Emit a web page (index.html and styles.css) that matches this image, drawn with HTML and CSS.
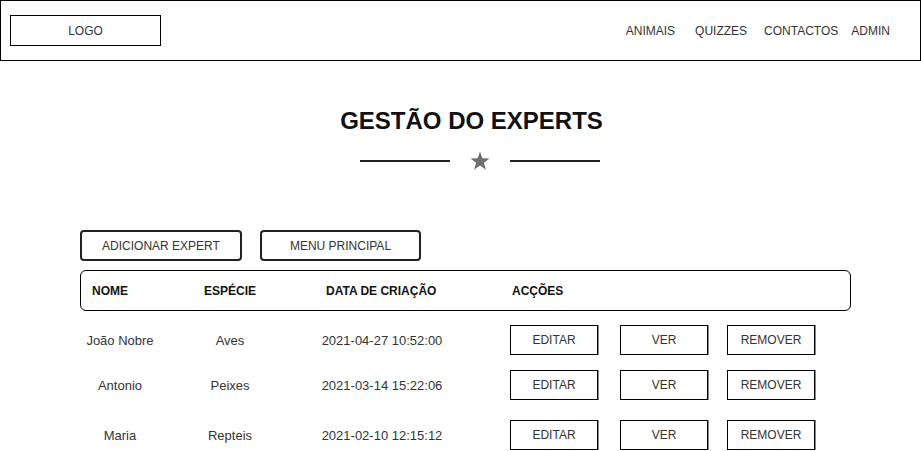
FILE: index.html
```html
<!DOCTYPE html>
<html lang="pt">
<head>
<meta charset="utf-8">
<title>Gestão do Experts</title>
<link rel="stylesheet" href="styles.css">
</head>
<body>
<header class="topbar">
  <div class="logo">LOGO</div>
  <nav class="nav">
    <a class="nav-link">ANIMAIS</a>
    <a class="nav-link nav-link--quiz">QUIZZES</a>
    <a class="nav-link nav-link--contact">CONTACTOS</a>
    <a class="nav-link nav-link--admin">ADMIN</a>
  </nav>
</header>

<main class="page">
  <h1 class="title">GESTÃO DO EXPERTS</h1>
  <div class="divider">
    <span class="divider-line"></span>
    <svg class="star" width="20" height="20" viewBox="0 0 20 20" aria-hidden="true">
      <polygon points="10,0.5 12.4,7.3 19.6,7.4 13.9,11.8 16,18.8 10,14.6 4,18.8 6.1,11.8 0.4,7.4 7.6,7.3" fill="#707070"/>
    </svg>
    <span class="divider-line"></span>
  </div>

  <section class="panel">
    <div class="toolbar">
      <button class="btn-round">ADICIONAR EXPERT</button>
      <button class="btn-round btn-round--menu">MENU PRINCIPAL</button>
    </div>

    <div class="table-head">
      <span>NOME</span>
      <span>ESPÉCIE</span>
      <span>DATA DE CRIAÇÃO</span>
      <span>ACÇÕES</span>
    </div>

    <div class="row row--first">
      <span class="cell">João Nobre</span>
      <span class="cell">Aves</span>
      <span class="cell">2021-04-27 10:52:00</span>
      <div class="actions">
        <button class="btn-sq">EDITAR</button>
        <button class="btn-sq btn-sq--ver">VER</button>
        <button class="btn-sq btn-sq--rem">REMOVER</button>
      </div>
    </div>
    <div class="row">
      <span class="cell">Antonio</span>
      <span class="cell">Peixes</span>
      <span class="cell">2021-03-14 15:22:06</span>
      <div class="actions">
        <button class="btn-sq">EDITAR</button>
        <button class="btn-sq btn-sq--ver">VER</button>
        <button class="btn-sq btn-sq--rem">REMOVER</button>
      </div>
    </div>
    <div class="row row--last">
      <span class="cell">Maria</span>
      <span class="cell">Repteis</span>
      <span class="cell">2021-02-10 12:15:12</span>
      <div class="actions">
        <button class="btn-sq">EDITAR</button>
        <button class="btn-sq btn-sq--ver">VER</button>
        <button class="btn-sq btn-sq--rem">REMOVER</button>
      </div>
    </div>
  </section>
</main>
</body>
</html>
```

FILE: styles.css
```css
* { box-sizing: border-box; }

html, body {
  margin: 0;
  padding: 0;
  background: #fff;
}

body {
  font-family: "Liberation Sans", Arial, sans-serif;
  font-size: 12px;
  color: #333;
  overflow: hidden;
}

button {
  font-family: inherit;
  font-size: 12px;
  color: #333;
  background: #fff;
  cursor: pointer;
  padding: 0;
}

/* Top bar */
.topbar {
  display: flex;
  align-items: center;
  height: 61px;
  border: 1px solid #000;
  padding-left: 9px;
  padding-right: 30px;
}

.logo {
  width: 151px;
  height: 31px;
  border: 1px solid #000;
  display: flex;
  align-items: center;
  justify-content: center;
  color: #333;
}

.nav {
  margin-left: auto;
  display: flex;
  align-items: center;
}

.nav-link {
  color: #333;
  text-decoration: none;
}

.nav-link--quiz { margin-left: 20px; }
.nav-link--contact { margin-left: 17px; }
.nav-link--admin { margin-left: 13px; }

/* Title */
.page {
  display: flex;
  flex-direction: column;
}

.title {
  margin: 46px 0 0 22px;
  text-align: center;
  font-size: 24px;
  font-weight: bold;
  color: #111;
}

.divider {
  margin: 16px 0 0 39px;
  display: flex;
  align-items: center;
  justify-content: center;
  gap: 20px;
  height: 20px;
}

.divider-line {
  width: 90px;
  height: 2px;
  background: #222;
}

.star { display: block; }

/* Panel */
.panel {
  margin: 59px 0 0 80px;
  width: 771px;
}

.toolbar {
  display: flex;
  gap: 18px;
}

.btn-round {
  width: 162px;
  height: 31px;
  border: 2px solid #222;
  border-radius: 4px;
}

.btn-round--menu { width: 161px; }

.table-head {
  margin-top: 9px;
  height: 41px;
  border: 1px solid #000;
  border-radius: 6px;
  padding-left: 11px;
  display: grid;
  grid-template-columns: 112px 122px 186px 1fr;
  align-items: center;
  font-weight: bold;
  color: #111;
}

.row {
  display: grid;
  grid-template-columns: 80px 140px 164px 1fr;
  align-items: center;
  margin-top: 15px;
}

.row--first { margin-top: 14px; }
.row--last { margin-top: 20px; }

.cell {
  text-align: center;
  color: #333;
  font-size: 13px;
}

.actions {
  display: flex;
  margin-left: 46px;
}

.btn-sq {
  width: 88px;
  height: 30px;
  border: 1px solid #000;
  border-radius: 0;
  box-shadow: 1px 0 0 #888;
}

.btn-sq--ver { margin-left: 22px; }
.btn-sq--rem { margin-left: 19px; }
```
